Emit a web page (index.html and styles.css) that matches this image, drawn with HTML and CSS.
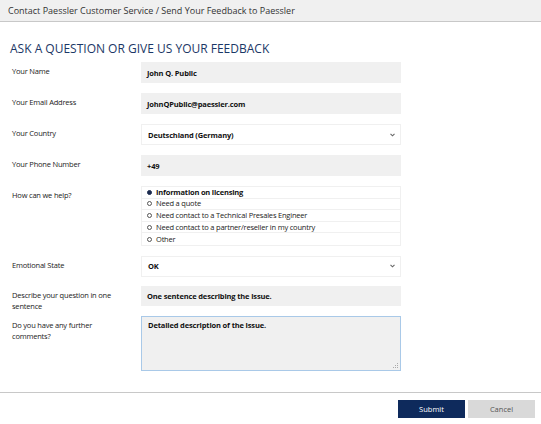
FILE: index.html
```html
<!DOCTYPE html>
<html>
<head>
<meta charset="utf-8">
<link rel="stylesheet" href="styles.css">
</head>
<body>
<div class="page">
  <header class="topbar">Contact Paessler Customer Service / Send Your Feedback to Paessler</header>
  <main class="content">
    <h1 class="title">ASK A QUESTION OR GIVE US YOUR FEEDBACK</h1>
    <div class="form">
      <div class="row">
        <div class="label">Your Name</div>
        <div class="field input">John Q. Public</div>
      </div>
      <div class="row">
        <div class="label">Your Email Address</div>
        <div class="field input">JohnQPublic@paessler.com</div>
      </div>
      <div class="row">
        <div class="label">Your Country</div>
        <div class="field select"><span>Deutschland (Germany)</span>
          <svg class="chev" width="5" height="4" viewBox="0 0 5 4"><path d="M0.5 0.8 L2.5 2.8 L4.5 0.8" fill="none" stroke="#666" stroke-width="1.1"/></svg>
        </div>
      </div>
      <div class="row">
        <div class="label">Your Phone Number</div>
        <div class="field input">+49</div>
      </div>
      <div class="row">
        <div class="label">How can we help?</div>
        <div class="radios">
          <div class="radio checked"><span class="dot"></span>Information on licensing</div>
          <div class="radio"><span class="dot"></span>Need a quote</div>
          <div class="radio"><span class="dot"></span>Need contact to a Technical Presales Engineer</div>
          <div class="radio"><span class="dot"></span>Need contact to a partner/reseller in my country</div>
          <div class="radio"><span class="dot"></span>Other</div>
        </div>
      </div>
      <div class="row">
        <div class="label">Emotional State</div>
        <div class="field select"><span>OK</span>
          <svg class="chev" width="5" height="4" viewBox="0 0 5 4"><path d="M0.5 0.8 L2.5 2.8 L4.5 0.8" fill="none" stroke="#666" stroke-width="1.1"/></svg>
        </div>
      </div>
      <div class="row tight">
        <div class="label">Describe your question in one sentence</div>
        <div class="field input short">One sentence describing the issue.</div>
      </div>
      <div class="row">
        <div class="label">Do you have any further comments?</div>
        <div class="field textarea">Detailed description of the issue.
          <svg class="grip" width="5" height="5" viewBox="0 0 5 5"><rect x="4" y="0" width="1" height="1" fill="#aaa"/><rect x="2" y="2" width="1" height="1" fill="#aaa"/><rect x="4" y="2" width="1" height="1" fill="#aaa"/><rect x="0" y="4" width="1" height="1" fill="#aaa"/><rect x="2" y="4" width="1" height="1" fill="#aaa"/><rect x="4" y="4" width="1" height="1" fill="#aaa"/></svg>
        </div>
      </div>
    </div>
  </main>
  <footer class="footer">
    <button class="btn primary">Submit</button>
    <button class="btn secondary">Cancel</button>
  </footer>
</div>
</body>
</html>
```
FILE: styles.css
```css
* { box-sizing: border-box; }
html, body { margin: 0; padding: 0; background: #fff; }
body {
  font-family: "Open Sans", "Noto Sans", "Liberation Sans", sans-serif;
  color: #333;
  width: 541px;
  height: 424px;
  overflow: hidden;
}
.page { display: flex; flex-direction: column; height: 424px; }
.topbar {
  height: 22px;
  background: #f0f0f0;
  border-bottom: 1px solid #c8c8c8;
  font-size: 9px;
  line-height: 21px;
  padding-left: 8px;
  color: #333;
}
.content { padding: 0 0 0 12px; flex: 1; }
.title {
  margin: 19px 0 0 -2px;
  font-size: 12px;
  font-weight: 400;
  color: #1b3766;
  line-height: 16px;
}
.form {
  margin-top: 5px;
  display: flex;
  flex-direction: column;
  gap: 10px;
}
.row {
  display: grid;
  grid-template-columns: 129px 260px;
  align-items: start;
}
.row.tight { margin-top: -1px; }
.label {
  font-size: 7.5px;
  letter-spacing: -0.2px;
  line-height: 11px;
  padding-top: 4px;
  margin-bottom: -15px;
  color: #222;
  padding-right: 22px;
}
.field {
  height: 21px;
  font-size: 7.5px;
  letter-spacing: -0.15px;
  font-weight: 700;
  color: #111;
  padding: 0 6px;
  display: flex;
  align-items: center;
}
.field.short { height: 20px; }
.input { background: #f0f0f0; }
.select {
  background: #fff;
  border: 1px solid #f0f0f0;
  justify-content: space-between;
  padding-right: 5px;
}
.chev { display: block; }
.textarea {
  height: 55px;
  background: #f0f0f0;
  border: 1px solid #a9c9e8;
  align-items: flex-start;
  padding-top: 3px;
  position: relative;
}
.grip { position: absolute; right: 2px; bottom: 2px; }
.radios {
  border: 1px solid #f0f0f0;
  display: flex;
  flex-direction: column;
}
.radio {
  height: 11.6px;
  font-size: 7.5px;
  letter-spacing: -0.2px;
  line-height: 11px;
  padding-left: 5px;
  display: flex;
  align-items: center;
  color: #222;
  border-bottom: 1px solid #f0f0f0;
}
.radio:last-child { border-bottom: none; }
.radio.checked { font-weight: 700; color: #111; }
.dot {
  width: 5px;
  height: 5px;
  border-radius: 50%;
  border: 1px solid #555;
  margin-right: 4px;
  flex: none;
}
.radio.checked .dot { background: #1b2a4e; border-color: #1b2a4e; }
.footer {
  height: 32px;
  border-top: 1px solid #c8c8c8;
  display: flex;
  justify-content: flex-end;
  gap: 3px;
  padding: 7px 6px 0 0;
}
.btn {
  width: 67px;
  height: 18px;
  border: none;
  font-family: inherit;
  font-size: 7.5px;
  padding: 0;
}
.primary { background: #0e2a5c; color: #fff; }
.secondary { background: #d9d9d9; color: #555; }
```
